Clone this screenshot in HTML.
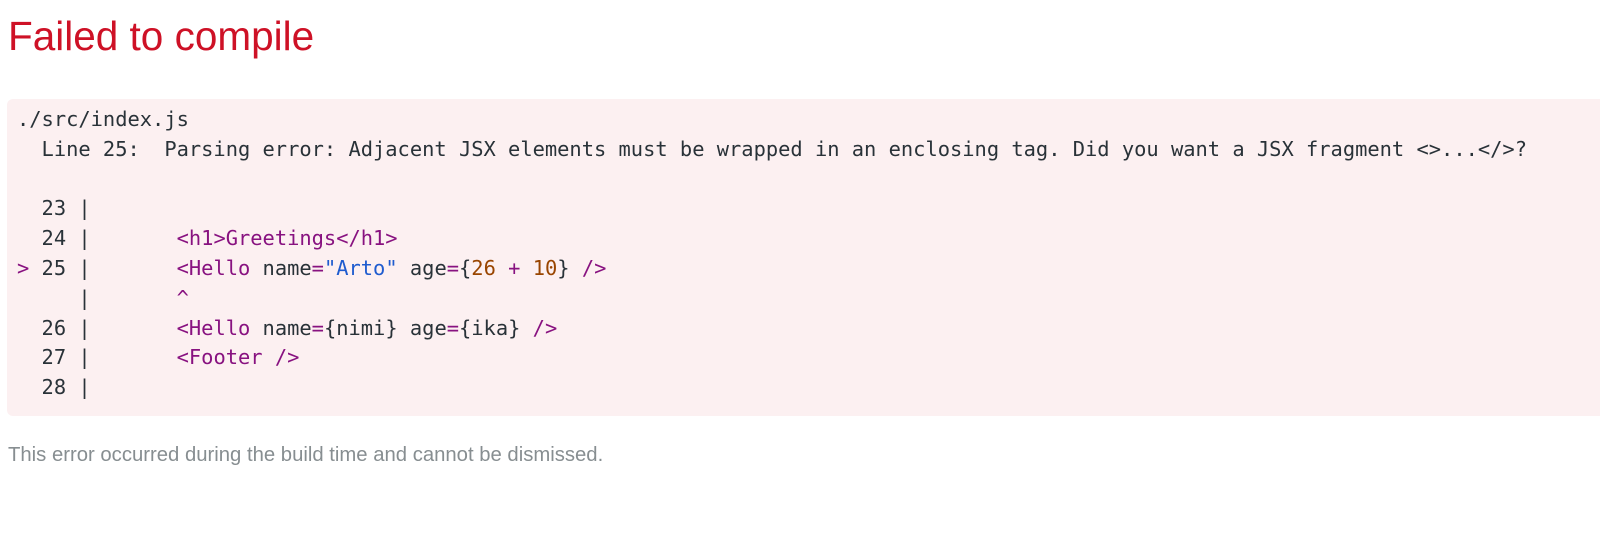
<!DOCTYPE html>
<html><head><meta charset="utf-8"><style>
html,body{margin:0;padding:0;background:#fff;width:1600px;height:551px;overflow:hidden}
body{font-family:"Liberation Sans",Arial,sans-serif}
h1{position:absolute;left:8px;top:13px;margin:0;font-size:40.5px;font-weight:normal;color:#ce1126;line-height:46px}
pre{position:absolute;left:7px;top:99px;width:1640px;height:317px;box-sizing:border-box;margin:0;padding:6px 10px 10px 10px;background:#fcf0f1;border-radius:6px;font-family:"DejaVu Sans Mono","Liberation Mono",monospace;font-size:20.4px;line-height:29.8px;color:#293238}
.t{color:#881280}.s{color:#1f5ccf}.n{color:#994500}.g{color:#293238}
.f{position:absolute;left:8px;top:443px;font-size:20.3px;line-height:24px;color:#878e91}
</style></head><body>
<h1>Failed to compile</h1>
<pre>./src/index.js
  Line 25:  Parsing error: Adjacent JSX elements must be wrapped in an enclosing tag. Did you want a JSX fragment &lt;&gt;...&lt;/&gt;?

  23 <span class="g">|</span>
  24 <span class="g">|</span>       <span class="t">&lt;h1&gt;Greetings&lt;/h1&gt;</span>
<span class="t">&gt;</span> 25 <span class="g">|</span>       <span class="t">&lt;Hello</span> name<span class="t">=</span><span class="s">"Arto"</span> age<span class="t">=</span>{<span class="n">26</span> <span class="t">+</span> <span class="n">10</span>} <span class="t">/&gt;</span>
     <span class="g">|</span>       <span class="t">^</span>
  26 <span class="g">|</span>       <span class="t">&lt;Hello</span> name<span class="t">=</span>{nimi} age<span class="t">=</span>{ika} <span class="t">/&gt;</span>
  27 <span class="g">|</span>       <span class="t">&lt;Footer /&gt;</span>
  28 <span class="g">|</span></pre>
<div class="f">This error occurred during the build time and cannot be dismissed.</div>
</body></html>
